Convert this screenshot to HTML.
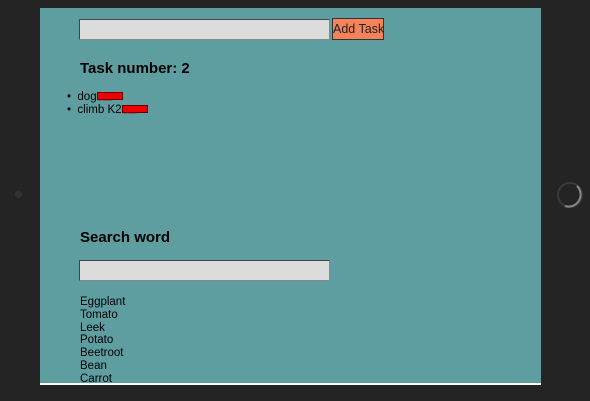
<!DOCTYPE html>
<html><head><style>
body{margin:0;width:590px;height:401px;background:#242424;position:relative;overflow:hidden;font-family:"Liberation Sans",Arial,sans-serif;color:#000}
.s{position:absolute;left:40px;top:8px;width:501px;height:375px;background:#5f9ea0;border-bottom:2px solid #fff}
.a{position:absolute}
.inp{background:#dcdcdc;border:1px solid #444;border-right-color:#888;border-bottom-color:#888;box-sizing:border-box}
.btn{background:#f58259;border:1px solid #333;font-size:12.5px;line-height:20px;padding-left:0px;box-sizing:border-box;overflow:hidden;white-space:nowrap;color:#222}
h{font-weight:bold;font-size:15px}
.li{font-size:11.5px;line-height:13px}
.rm{display:inline-block;background:#e00;border:1px solid #600;width:24px;height:6px;vertical-align:-1px;font-size:4px;color:#900}
.w{font-size:11.5px;line-height:12.8px}
</style></head><body>
<div class="s"></div>
<div class="a inp" style="left:79px;top:19px;width:251px;height:21px"></div>
<div class="a btn" style="left:332px;top:18px;width:52px;height:22px">Add Task</div>
<div class="a" style="left:80px;top:60px"><h>Task number: 2</h></div>
<div class="a li" style="left:67px;top:91px">•&nbsp; dog<span class="rm">Remove</span></div>
<div class="a li" style="left:67px;top:104px">•&nbsp; climb K2<span class="rm">Remove</span></div>
<div class="a" style="left:80px;top:229px"><h>Search word</h></div>
<div class="a inp" style="left:79px;top:260px;width:251px;height:21px"></div>
<div class="a w" style="left:80px;top:296px">Eggplant<br>Tomato<br>Leek<br>Potato<br>Beetroot<br>Bean<br>Carrot</div>
<div class="a" style="left:15px;top:191px;width:7px;height:7px;border-radius:50%;background:#333"></div>
<svg class="a" style="left:555px;top:180px" width="30" height="30"><circle cx="15" cy="15" r="12" fill="none" stroke="#3a3a3a" stroke-width="2"/><path d="M22 6 A12 12 0 0 1 10 26" fill="none" stroke="#888" stroke-width="2"/></svg>
</body></html>
